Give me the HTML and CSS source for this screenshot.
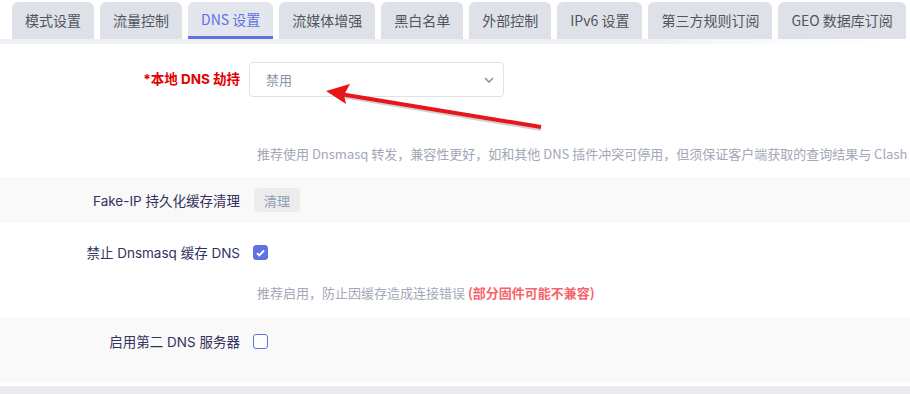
FILE: index.html
```html
<!DOCTYPE html>
<html lang="zh-CN">
<head>
    <meta charset="UTF-8">
    <title>DNS 设置</title>
    <link rel="stylesheet" href="styles.css">
</head>
<body>
    <ul class="tabs">
        <li class="tab">模式设置</li>
        <li class="tab">流量控制</li>
        <li class="tab active">DNS 设置</li>
        <li class="tab">流媒体增强</li>
        <li class="tab">黑白名单</li>
        <li class="tab">外部控制</li>
        <li class="tab">IPv6 设置</li>
        <li class="tab">第三方规则订阅</li>
        <li class="tab">GEO 数据库订阅</li>
    </ul>
    <div class="tab-shadow"></div>

    <div class="section">
        <div class="row row-first">
            <label class="label required">*本地 DNS 劫持</label>
            <div class="field">
                <div class="select">
                    <span>禁用</span>
                    <svg class="chevron" width="10" height="6" viewBox="0 0 10 6"><path d="M1 1l4 4 4-4" fill="none" stroke="#8a94a6" stroke-width="1.6"/></svg>
                </div>
                <div class="help help-far">推荐使用 Dnsmasq 转发，兼容性更好，如和其他 DNS 插件冲突可停用，但须保证客户端获取的查询结果与 Clash 结果一致</div>
            </div>
        </div>

        <div class="row row-alt row-btn">
            <label class="label">Fake-IP 持久化缓存清理</label>
            <div class="field">
                <button class="btn">清理</button>
            </div>
        </div>

        <div class="row row-check">
            <label class="label">禁止 Dnsmasq 缓存 DNS</label>
            <div class="field">
                <span class="checkbox checked">
                    <svg width="9" height="8" viewBox="0 0 9 8"><path d="M1 4.2l2.3 2.2L8 1.5" fill="none" stroke="#fff" stroke-width="2"/></svg>
                </span>
                <div class="help">推荐启用，防止因缓存造成连接错误 <b class="warn">(部分固件可能不兼容)</b></div>
            </div>
        </div>

        <div class="row row-alt row-last">
            <label class="label">启用第二 DNS 服务器</label>
            <div class="field">
                <span class="checkbox"></span>
            </div>
        </div>
    </div>
    <div class="next-section"></div>

    <svg class="arrow" width="910" height="394" viewBox="0 0 910 394">
        <line x1="541" y1="129" x2="342" y2="96" stroke="#777" stroke-width="4" opacity="0.35"/>
        <line x1="541" y1="127" x2="340" y2="94" stroke="#e8161b" stroke-width="4"/>
        <polygon points="326,91 350,84 344,95 346,104" fill="#e8161b"/>
    </svg>
</body>
</html>
```

FILE: styles.css
```css
body {
    margin: 0;
    font-family: "Inter", "Noto Sans CJK SC", sans-serif;
    font-size: 13.5px;
    color: #32325d;
    background-color: #fff;
    width: 910px;
    overflow: hidden;
}

.tabs {
    display: flex;
    gap: 6px;
    list-style: none;
    margin: 0;
    padding: 2px 0 0 12px;
    white-space: nowrap;
}

.tab {
    height: 37px;
    line-height: 37px;
    padding: 0 13px;
    background-color: #dee2e8;
    border-radius: 6px 6px 0 0;
    font-family: "Noto Sans CJK SC", sans-serif;
    font-size: 14px;
    color: #50555e;
    box-sizing: border-box;
}

.tab.active {
    background-color: #e3e7ed;
    color: #5e72e4;
    border-bottom: 3px solid #5e72e4;
    line-height: 35px;
}

.tab-shadow {
    height: 5px;
    background: linear-gradient(to right, #eef0f4 0%, #eef0f4 72%, #f8f9fa 80%, #fff 100%);
}

.row {
    display: grid;
    grid-template-columns: 240px 1fr;
    column-gap: 9px;
    align-items: start;
}

.row-alt {
    background-color: #f9f9f9;
}

.label {
    text-align: right;
    color: #32325d;
    white-space: nowrap;
}

.field {
    min-width: 0;
    overflow: hidden;
}

.required {
    color: #e30000;
    font-weight: bold;
}

.row-first {
    padding-top: 18px;
    height: 115px;
}

.row-first .label {
    line-height: 35px;
}

.select {
    width: 255px;
    height: 35px;
    box-sizing: border-box;
    border: 1px solid #dee2e6;
    border-radius: 4px;
    display: flex;
    align-items: center;
    justify-content: space-between;
    padding: 0 9px 0 16px;
    color: #8a94a6;
    font-size: 13px;
}

.help {
    font-family: "Noto Sans CJK SC", sans-serif;
    color: #a3a7b7;
    font-size: 13px;
    padding-left: 8px;
    white-space: nowrap;
}

.help-far {
    margin-top: 47px;
}

.warn {
    color: #f5656a;
}

.row-btn {
    height: 46px;
    align-items: center;
}

.btn {
    font-family: "Noto Sans CJK SC", sans-serif;
    font-size: 13px;
    color: #8c9db3;
    background-color: #ececec;
    border: none;
    border-radius: 3px;
    padding: 0 10px;
    height: 24px;
    margin-left: 5px;
}

.row-check {
    height: 94px;
    padding-top: 22px;
    box-sizing: border-box;
}

.row-check .label,
.row-last .label {
    line-height: 16px;
}

.checkbox {
    display: flex;
    align-items: center;
    justify-content: center;
    width: 15px;
    height: 15px;
    box-sizing: border-box;
    border: 1.5px solid #5e72e4;
    border-radius: 3px;
    margin-left: 4px;
    background-color: #fff;
}

.checkbox.checked {
    background-color: #5e72e4;
    border-color: #5e72e4;
}

.row-check .help {
    margin-top: 23px;
}

.row-last {
    height: 65px;
    padding-top: 17px;
    box-sizing: border-box;
}

.next-section {
    margin-top: 4px;
    height: 8px;
    background-color: #e9ebef;
}

.arrow {
    position: absolute;
    left: 0;
    top: 0;
    pointer-events: none;
}
```
